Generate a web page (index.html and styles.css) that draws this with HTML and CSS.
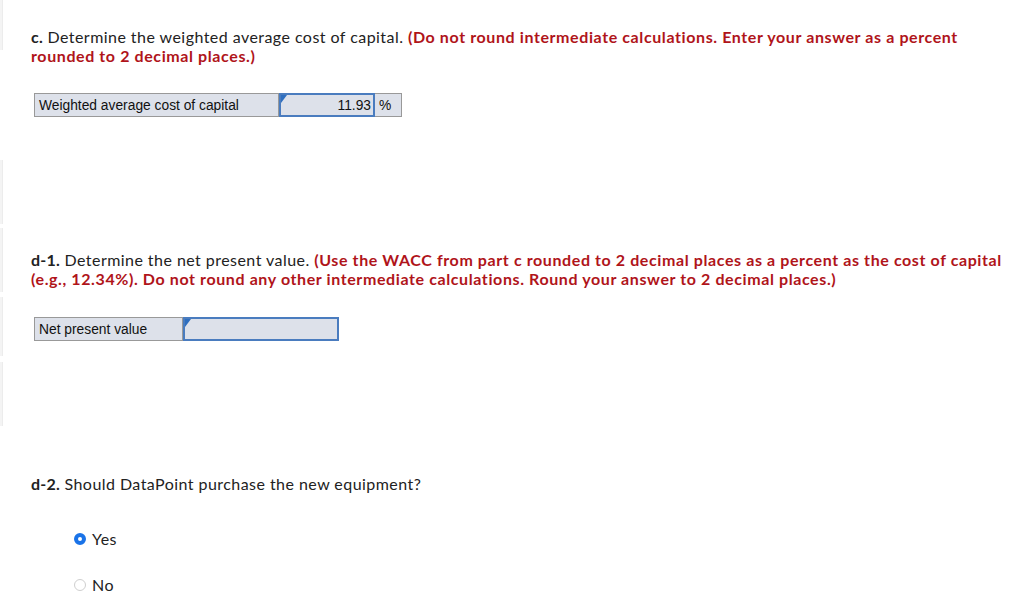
FILE: index.html
```html
<!DOCTYPE html>
<html>
<head>
<meta charset="utf-8">
<link rel="stylesheet" href="styles.css">
</head>
<body>
<div class="page">
  <div class="rail">
    <div class="seg s1"></div>
    <div class="seg s2"></div>
    <div class="seg s3"></div>
    <div class="seg s4"></div>
    <div class="seg s5"></div>
  </div>
  <main class="content">
    <p class="q q-c"><b>c.</b> Determine the weighted average cost of capital. <span class="hint">(Do not round intermediate calculations. Enter your answer as a percent rounded to 2 decimal places.)</span></p>
    <div class="grid grid-wacc">
      <div class="cell label">Weighted average cost of capital</div>
      <div class="cell input"><span class="flag"></span>11.93</div>
      <div class="cell unit">%</div>
    </div>

    <p class="q q-d1"><b>d-1.</b> Determine the net present value. <span class="hint">(Use the WACC from part c rounded to 2 decimal places as a percent as the cost of capital (e.g., 12.34%). Do not round any other intermediate calculations. Round your answer to 2 decimal places.)</span></p>
    <div class="grid grid-npv">
      <div class="cell label">Net present value</div>
      <div class="cell input"><span class="flag"></span></div>
    </div>

    <p class="q q-d2"><b>d-2.</b> Should DataPoint purchase the new equipment?</p>
    <div class="options">
      <label class="opt"><span class="radio checked"></span>Yes</label>
      <label class="opt"><span class="radio"></span>No</label>
    </div>
  </main>
</div>
</body>
</html>
```
FILE: styles.css
```css
html, body {
  margin: 0;
  padding: 0;
  background: #fff;
}
.page {
  display: flex;
  width: 1024px;
  height: 616px;
  overflow: hidden;
}
.rail {
  width: 3px;
  flex: none;
  display: flex;
  flex-direction: column;
}
.seg {
  background: #f4f4f4;
  border-right: 1px solid #ececec;
}
.s1 { height: 50px; }
.s2 { height: 64px; margin-top: 110px; }
.s3 { height: 64px; margin-top: 4px; }
.s4 { height: 59px; margin-top: 5px; }
.s5 { height: 64px; margin-top: 6px; }

.content {
  padding-left: 28px;
  padding-top: 27px;
  font-family: Lato, "Open Sans", sans-serif;
  color: #222;
}
.q {
  margin: 0;
  font-size: 16px;
  line-height: 19px;
  letter-spacing: 0.45px;
  width: 975px;
}
.q b {
  font-weight: 700;
  letter-spacing: 0.2px;
}
.hint {
  color: #b0141a;
  font-weight: 700;
  letter-spacing: 0.6px;
}
.grid {
  display: flex;
  margin-left: 3px;
  font-family: "Liberation Sans", Arial, sans-serif;
  font-size: 13.8px;
  color: #111;
  height: 24px;
}
.grid-wacc { margin-top: 28px; }
.grid-npv { margin-top: 29px; }
.cell {
  background: #dde1ea;
  box-sizing: border-box;
  height: 24px;
  display: flex;
  align-items: center;
  border: 1px solid #999;
}
.label {
  padding-left: 4px;
  border-right: 1px solid #999;
}
.grid-wacc .label { width: 245px; }
.grid-npv .label { width: 149px; }
.input {
  position: relative;
  border: 2px solid #4a7cbf;
  justify-content: flex-end;
  padding-right: 2px;
}
.grid-wacc .input { width: 96px; }
.grid-npv .input { width: 156px; }
.flag {
  position: absolute;
  left: 0;
  top: 0;
  width: 0;
  height: 0;
  border-top: 8px solid #2f6fbf;
  border-right: 6px solid transparent;
}
.unit {
  width: 27px;
  border-left: none;
  padding-left: 4px;
}
.q-d1 { margin-top: 133px; }
.q-d2 { margin-top: 133px; }
.options {
  display: flex;
  flex-direction: column;
  gap: 26px;
  margin-top: 36px;
  margin-left: 43px;
}
.opt {
  display: flex;
  align-items: center;
  font-family: Lato, "Open Sans", sans-serif;
  font-size: 16px;
  letter-spacing: 0.45px;
  line-height: 20px;
  color: #222;
}
.radio {
  width: 12px;
  height: 12px;
  border-radius: 50%;
  box-sizing: border-box;
  border: 1px solid #cfcfcf;
  background: #fff;
  margin-right: 6px;
}
.radio.checked {
  border: 4px solid #1a73e8;
  background: #fff;
}
```
